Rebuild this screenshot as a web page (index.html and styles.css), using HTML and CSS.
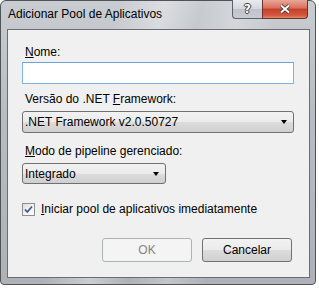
FILE: index.html
```html
<!DOCTYPE html>
<html lang="pt-BR">
<head>
  <meta charset="UTF-8" />
  <title>Adicionar Pool de Aplicativos</title>
  <link rel="stylesheet" href="styles.css">
</head>
<body>
  <div class="window">
    <div class="titlebar">
      <span class="title">Adicionar Pool de Aplicativos</span>
      <div class="caption-buttons">
        <button class="cap-btn help">?</button>
        <button class="cap-btn close">
          <svg width="12" height="10" viewBox="0 0 12 10">
            <path d="M2 1.5 L10 8.5 M10 1.5 L2 8.5" stroke="#3b2a28" stroke-width="3.6" fill="none"/>
            <path d="M2 1.5 L10 8.5 M10 1.5 L2 8.5" stroke="#ffffff" stroke-width="2" fill="none"/>
          </svg>
        </button>
      </div>
    </div>

    <div class="client">
      <label class="field-label first"><u>N</u>ome:</label>
      <input class="textbox" type="text">

      <label class="field-label"><span>Versão do .NET <u>F</u>ramework:</span></label>
      <div class="combo">
        <span>.NET Framework v2.0.50727</span>
        <span class="arrow"></span>
      </div>

      <label class="field-label"><span><u>M</u>odo de pipeline gerenciado:</span></label>
      <div class="combo small">
        <span>Integrado</span>
        <span class="arrow"></span>
      </div>

      <label class="check-row">
        <span class="checkbox">
          <svg width="11" height="11" viewBox="0 0 11 11">
            <path d="M2 5.5 L4.3 8 L9 2.5" stroke="#3a5a9e" stroke-width="1.8" fill="none"/>
          </svg>
        </span>
        <span><u>I</u>niciar pool de aplicativos imediatamente</span>
      </label>

      <div class="buttons">
        <button class="btn" disabled>OK</button>
        <button class="btn">Cancelar</button>
      </div>
    </div>
  </div>
</body>
</html>
```

FILE: styles.css
```css
body {
  margin: 0;
  background-color: #ffffff;
  font-family: 'Liberation Sans', Arial, sans-serif;
  font-size: 12px;
  color: #000;
}

u {
  text-decoration-thickness: 1px;
  text-underline-offset: 1px;
}

.window {
  width: 316px;
  height: 285px;
  box-sizing: border-box;
  display: flex;
  flex-direction: column;
  padding: 0 5px 6px 6px;
  border: 1px solid #505459;
  border-radius: 6px 6px 4px 4px;
  background:
    linear-gradient(105deg, rgba(255,255,255,0) 30%, rgba(255,255,255,0.35) 42%, rgba(255,255,255,0) 52%, rgba(255,255,255,0.25) 62%, rgba(255,255,255,0) 72%),
    linear-gradient(180deg, #c9ccd1 0%, #b9bdc3 40%, #aeb2b8 100%);
}

.titlebar {
  height: 28px;
  display: flex;
  justify-content: space-between;
  align-items: flex-start;
}

.title {
  margin: 6px 0 0 1px;
  line-height: 15px;
  color: #000;
}

.caption-buttons {
  display: flex;
  margin: -1px 2px 0 0;
}

.cap-btn {
  height: 19px;
  padding: 0;
  display: flex;
  align-items: center;
  justify-content: center;
  border: 1px solid #5e6166;
  border-top: none;
}

.help {
  width: 30px;
  border-radius: 0 0 0 4px;
  border-right: none;
  background: linear-gradient(180deg, #e9ebee 0%, #d3d6db 50%, #bfc3c9 51%, #c9cdd3 100%);
  color: #fff;
  font-family: 'DejaVu Sans', sans-serif;
  font-weight: bold;
  font-size: 12px;
  text-shadow: 1px 0 0 #3d4045, -1px 0 0 #3d4045, 0 1px 0 #3d4045, 0 -1px 0 #3d4045;
}

.close {
  width: 46px;
  border-radius: 0 0 4px 0;
  background: linear-gradient(180deg, #e7a898 0%, #d9705b 45%, #c53f28 50%, #d2573e 85%, #e08a6c 100%);
  border-color: #6b3329;
}

.client {
  flex: 1;
  display: flex;
  flex-direction: column;
  align-items: flex-start;
  padding: 0 15px 0 14px;
  border: 1px solid #6a6e74;
  background-color: #f0f0f0;
}

.field-label {
  margin: 8px 0 0 3px;
  line-height: 15px;
}

.field-label.first {
  margin-top: 15px;
}

.textbox {
  width: 100%;
  height: 22px;
  box-sizing: border-box;
  margin: 2px 0 0 0;
  border: 1px solid #7fb4e6;
  border-top-color: #6aa3d8;
  background: #fff;
  outline: none;
}

.combo {
  width: 100%;
  height: 22px;
  box-sizing: border-box;
  margin-top: 4px;
  display: flex;
  align-items: center;
  justify-content: space-between;
  padding: 0 6px 0 2px;
  border: 1px solid #707070;
  border-radius: 3px;
  background: linear-gradient(180deg, #f2f2f2 0%, #ebebeb 50%, #dddddd 51%, #cfcfcf 100%);
}

.combo.small {
  width: 144px;
  height: 21px;
}

.arrow {
  width: 0;
  height: 0;
  border-left: 3.5px solid transparent;
  border-right: 3.5px solid transparent;
  border-top: 4px solid #000;
}

.field-label + .combo {
  margin-top: 4px;
}

.combo + .field-label {
  margin-top: 11px;
}

.check-row {
  margin-top: 18px;
  display: flex;
  align-items: center;
  gap: 6px;
  line-height: 15px;
}

.checkbox {
  width: 13px;
  height: 13px;
  box-sizing: border-box;
  display: flex;
  align-items: center;
  justify-content: center;
  border: 1px solid #8e8f8f;
  background: linear-gradient(135deg, #dcdcdc 0%, #f6f6f6 60%, #ffffff 100%);
}

.buttons {
  align-self: flex-end;
  display: flex;
  gap: 10px;
  margin: 21px 2px 0 0;
}

.btn {
  width: 90px;
  height: 24px;
  padding: 0;
  font-family: 'Liberation Sans', Arial, sans-serif;
  font-size: 12px;
  color: #000;
  border: 1px solid #707070;
  border-radius: 3px;
  background: linear-gradient(180deg, #f2f2f2 0%, #ebebeb 50%, #dddddd 51%, #cfcfcf 100%);
}

.btn:disabled {
  color: #838383;
  border-color: #adb2b5;
  background: #f4f4f4;
}
```
